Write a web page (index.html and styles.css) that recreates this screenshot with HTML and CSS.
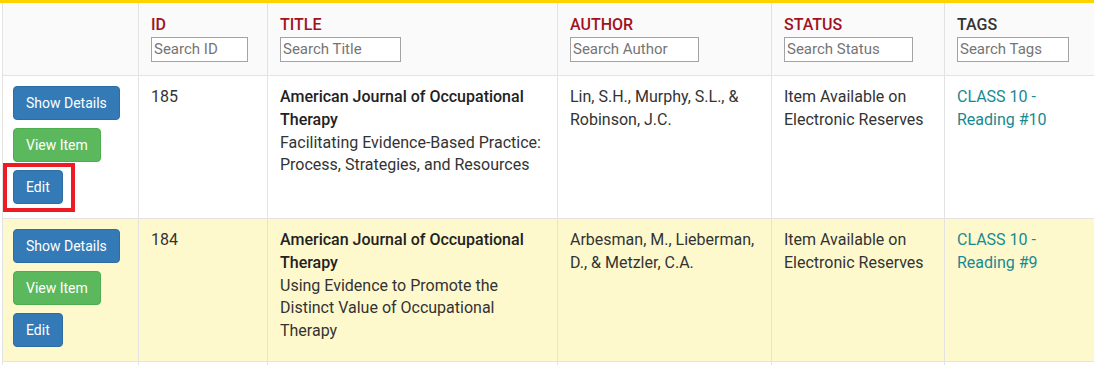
FILE: index.html
```html
<!DOCTYPE html>
<html lang="en">
<head>
  <meta charset="UTF-8">
  <title>Reserves</title>
  <link rel="stylesheet" href="styles.css">
</head>
<body>
  <table class="items">
    <thead>
      <tr>
        <th class="col-actions"></th>
        <th class="col-id"><span class="label">ID</span><input class="search w-id" placeholder="Search ID"></th>
        <th class="col-title"><span class="label">TITLE</span><input class="search w-title" placeholder="Search Title"></th>
        <th class="col-author"><span class="label">AUTHOR</span><input class="search w-author" placeholder="Search Author"></th>
        <th class="col-status"><span class="label">STATUS</span><input class="search w-status" placeholder="Search Status"></th>
        <th class="col-tags"><span class="label plain">TAGS</span><input class="search w-tags" placeholder="Search Tags"></th>
      </tr>
    </thead>
    <tbody>
      <tr>
        <td class="actions">
          <button class="btn blue">Show Details</button>
          <button class="btn green">View Item</button>
          <span class="highlight"><button class="btn blue">Edit</button></span>
        </td>
        <td>185</td>
        <td><strong>American Journal of Occupational Therapy</strong><br>Facilitating Evidence-Based Practice: Process, Strategies, and Resources</td>
        <td>Lin, S.H., Murphy, S.L., &amp; Robinson, J.C.</td>
        <td>Item Available on Electronic Reserves</td>
        <td class="tag">CLASS 10 - Reading #10</td>
      </tr>
      <tr class="odd">
        <td class="actions">
          <button class="btn blue">Show Details</button>
          <button class="btn green">View Item</button>
          <button class="btn blue">Edit</button>
        </td>
        <td>184</td>
        <td><strong>American Journal of Occupational Therapy</strong><br>Using Evidence to Promote the Distinct Value of Occupational Therapy</td>
        <td>Arbesman, M., Lieberman, D., &amp; Metzler, C.A.</td>
        <td>Item Available on Electronic Reserves</td>
        <td class="tag">CLASS 10 - Reading #9</td>
      </tr>
      <tr>
        <td class="actions"></td>
        <td></td><td></td><td></td><td></td><td></td>
      </tr>
    </tbody>
  </table>
</body>
</html>
```

FILE: styles.css
```css
html, body {
    margin: 0;
    padding: 0;
    background: #fff;
    overflow: hidden;
}
body {
    font-family: Roboto, "Liberation Sans", sans-serif;
    font-size: 16px;
    line-height: 1.42857;
    color: #333;
    border-top: 3px solid #ffd200;
}
.items {
    margin-left: 2px;
    border-collapse: collapse;
    table-layout: fixed;
    width: 1000px;
}
.items th, .items td {
    border: 1px solid #e3e3e3;
    vertical-align: top;
    text-align: left;
}
.items th {
    background: #fafafa;
    font-weight: 500;
    padding: 11px 12px 13px;
    border-top: none;
}
.items td {
    padding: 10px 12px 6px;
}
.items td.actions {
    padding-left: 10px;
    padding-right: 14px;
}
/* content widths, padding comes on top */
.col-actions { width: 111px; }
.col-id { width: 104px; }
.col-title { width: 265px; }
.col-author { width: 189px; }
.col-status { width: 148px; }
.col-tags { width: 130px; }

.label {
    display: block;
    color: #a0121e;
}
.label.plain { color: #333; }
.search {
    display: block;
    box-sizing: border-box;
    height: 25px;
    margin: 0;
    padding: 1px 2px;
    border: 1px solid #a3a3a3;
    font-family: Roboto, "Liberation Sans", sans-serif;
    font-size: 15px;
    color: #333;
    background: #fff;
}
.search::placeholder { color: #757575; }
.w-id { width: 97px; }
.w-title { width: 121px; }
.w-author { width: 129px; }
.w-status { width: 129px; }
.w-tags { width: 112px; }

.odd td { background: #fef9cd; }
.items strong { font-weight: 500; color: #222; }
.tag { color: #168a92; }

.btn {
    display: block;
    height: 34px;
    margin: 0 0 8px;
    padding: 6px 12px;
    border: 1px solid transparent;
    border-radius: 4px;
    font-family: Roboto, "Liberation Sans", sans-serif;
    font-size: 14px;
    line-height: 20px;
    color: #fff;
}
.blue { background: #337ab7; border-color: #2e6da4; }
.green { background: #5cb85c; border-color: #4cae4c; }
.highlight {
    display: block;
    position: relative;
    width: 50px;
}
.highlight::after {
    content: "";
    position: absolute;
    left: -10px;
    top: -7px;
    width: 64px;
    height: 41px;
    border: 4px solid #ed1c24;
}
```
